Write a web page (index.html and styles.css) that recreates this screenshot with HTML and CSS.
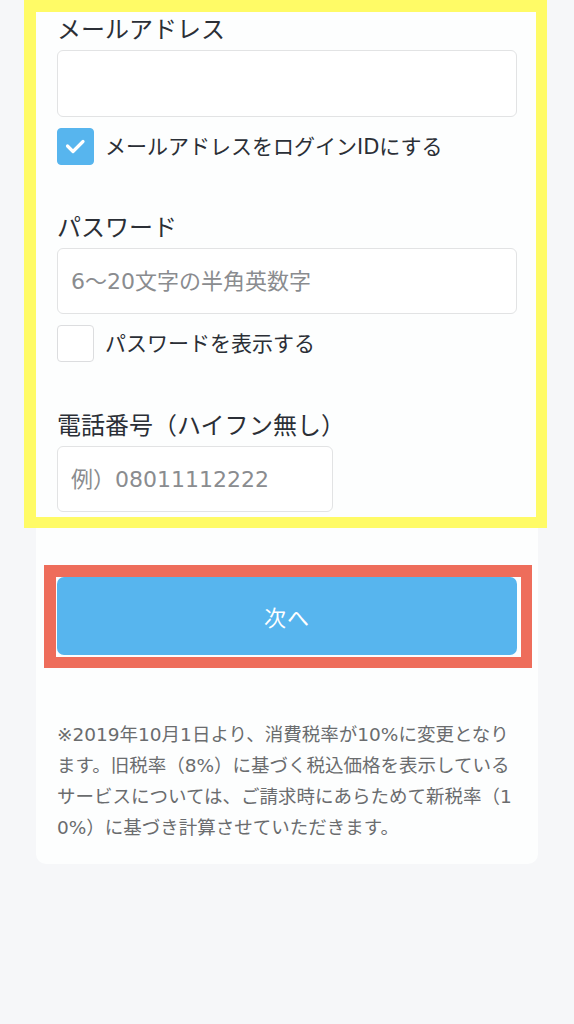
FILE: index.html
```html
<!DOCTYPE html>
<html lang="ja">
<head>
<meta charset="utf-8">
<title>会員登録</title>
<link rel="stylesheet" href="styles.css">
</head>
<body>
<div class="page">
  <div class="card">
    <div class="field">
      <div class="label">メールアドレス</div>
      <input class="input" type="text">
      <div class="check-row">
        <span class="box checked">
          <svg viewBox="0 0 37 37" width="37" height="37"><path d="M10.5 18 L16 23.5 L26 13.5" fill="none" stroke="#fff" stroke-width="3.2" stroke-linecap="round" stroke-linejoin="round"/></svg>
        </span>
        <span class="check-text">メールアドレスをログインIDにする</span>
      </div>
    </div>
    <div class="field field-gap">
      <div class="label">パスワード</div>
      <input class="input short-h" type="password" placeholder="6〜20文字の半角英数字">
      <div class="check-row">
        <span class="box"></span>
        <span class="check-text">パスワードを表示する</span>
      </div>
    </div>
    <div class="field field-gap">
      <div class="label">電話番号（ハイフン無し）</div>
      <input class="input short-h phone" type="tel" placeholder="例）08011112222">
    </div>
    <button class="next" type="button">次へ</button>
    <p class="note">※2019年10月1日より、消費税率が10%に変更となり<br>ます。旧税率（8%）に基づく税込価格を表示している<br>サービスについては、ご請求時にあらためて新税率（1<br>0%）に基づき計算させていただきます。</p>
  </div>
</div>
<div class="mark mark-yellow"></div>
<div class="mark mark-red"></div>
</body>
</html>
```
FILE: styles.css
```css
* { box-sizing: border-box; }
html, body {
  margin: 0;
  padding: 0;
  background: #f6f7f9;
}
body {
  font-family: "DejaVu Sans", "Noto Sans CJK JP", sans-serif;
  color: #2b2f36;
  min-height: 1024px;
  position: relative;
}
.page {
  padding: 0 36px;
}
.card {
  background: #fdfefe;
  border-radius: 0 0 10px 10px;
  padding: 12px 21px 21px;
  display: flex;
  flex-direction: column;
}
.field {
  display: flex;
  flex-direction: column;
}
.field-gap {
  margin-top: 45px;
}
.field-gap + .field-gap {
  margin-top: 46px;
}
.label {
  font-size: 24px;
  line-height: 36px;
  margin-bottom: 2px;
  white-space: nowrap;
}
.input {
  display: block;
  width: 100%;
  height: 67px;
  border: 1px solid #e2e3e4;
  border-radius: 6px;
  background: #fff;
  padding: 0 13px;
  font-family: "DejaVu Sans", "Noto Sans CJK JP", sans-serif;
  font-size: 22px;
  color: #2b2f36;
  outline: none;
}
.short-h { height: 66px; }
.phone { width: 276px; }
.input::placeholder {
  color: #8a8c8f;
  opacity: 1;
}
.check-row {
  display: flex;
  align-items: center;
  gap: 11px;
  margin-top: 11px;
  height: 37px;
}
.box {
  width: 37px;
  height: 37px;
  flex: none;
  border: 1px solid #dcdddf;
  border-radius: 4px;
  background: #fff;
  display: flex;
}
.box.checked {
  background: #57b5ee;
  border-color: #57b5ee;
}
.box svg { display: block; margin: -1px; }
.check-text {
  font-size: 21px;
  line-height: 30px;
  white-space: nowrap;
}
.next {
  margin-top: 65px;
  height: 78px;
  width: 100%;
  border: none;
  border-radius: 7px;
  background: #57b5ee;
  color: #fff;
  font-family: "DejaVu Sans", "Noto Sans CJK JP", sans-serif;
  font-size: 22px;
  letter-spacing: 1px;
}
.note {
  margin: 64px 0 0;
  font-size: 18.5px;
  line-height: 31px;
  color: #6a6c6e;
  white-space: nowrap;
}
.mark {
  position: absolute;
  pointer-events: none;
}
.mark-yellow {
  left: 24px;
  top: 0;
  width: 523px;
  height: 528px;
  border: 12px solid #fffb66;
  border-right-width: 11px;
  border-bottom-width: 11px;
}
.mark-red {
  left: 44px;
  top: 565px;
  width: 488px;
  height: 103px;
  border: 12px solid #ee6d5b;
  border-right-width: 11px;
  border-bottom-width: 11px;
}
```
